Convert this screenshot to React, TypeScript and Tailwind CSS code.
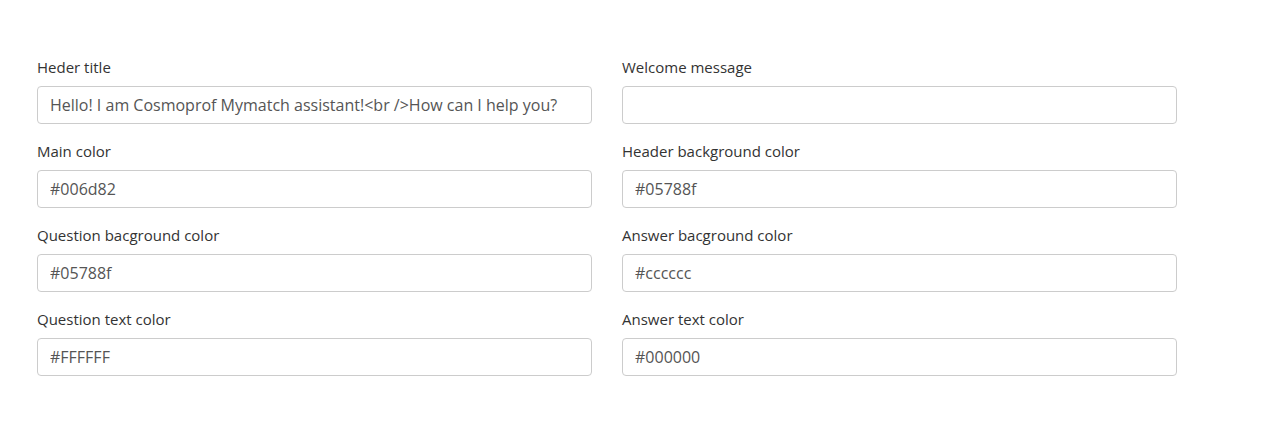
import React from "react";

const fields: [string, string][] = [
  ["Heder title", "Hello! I am Cosmoprof Mymatch assistant!<br />How can I help you?"],
  ["Welcome message", ""],
  ["Main color", "#006d82"],
  ["Header background color", "#05788f"],
  ["Question bacground color", "#05788f"],
  ["Answer bacground color", "#cccccc"],
  ["Question text color", "#FFFFFF"],
  ["Answer text color", "#000000"],
];

export default function App() {
  return (
    <div
      className="w-[1271px] h-[423px] bg-white pt-[57px] pl-[37px]"
      style={{ fontFamily: '"Open Sans", sans-serif' }}
    >
      <div className="grid grid-cols-[555px_555px] gap-x-[30px]">
        {fields.map(([label, value]) => (
          <div key={label} className="mb-[17px]">
            <label className="block text-[15px] leading-[21px] text-[#333] mb-[8px]">
              {label}
            </label>
            <input
              readOnly
              value={value}
              className="block w-full h-[38px] px-[12px] border border-[#ccc] rounded-[4px] text-[16px] text-[#555] bg-white outline-none"
              style={{ fontFamily: '"Open Sans", sans-serif' }}
            />
          </div>
        ))}
      </div>
    </div>
  );
}
